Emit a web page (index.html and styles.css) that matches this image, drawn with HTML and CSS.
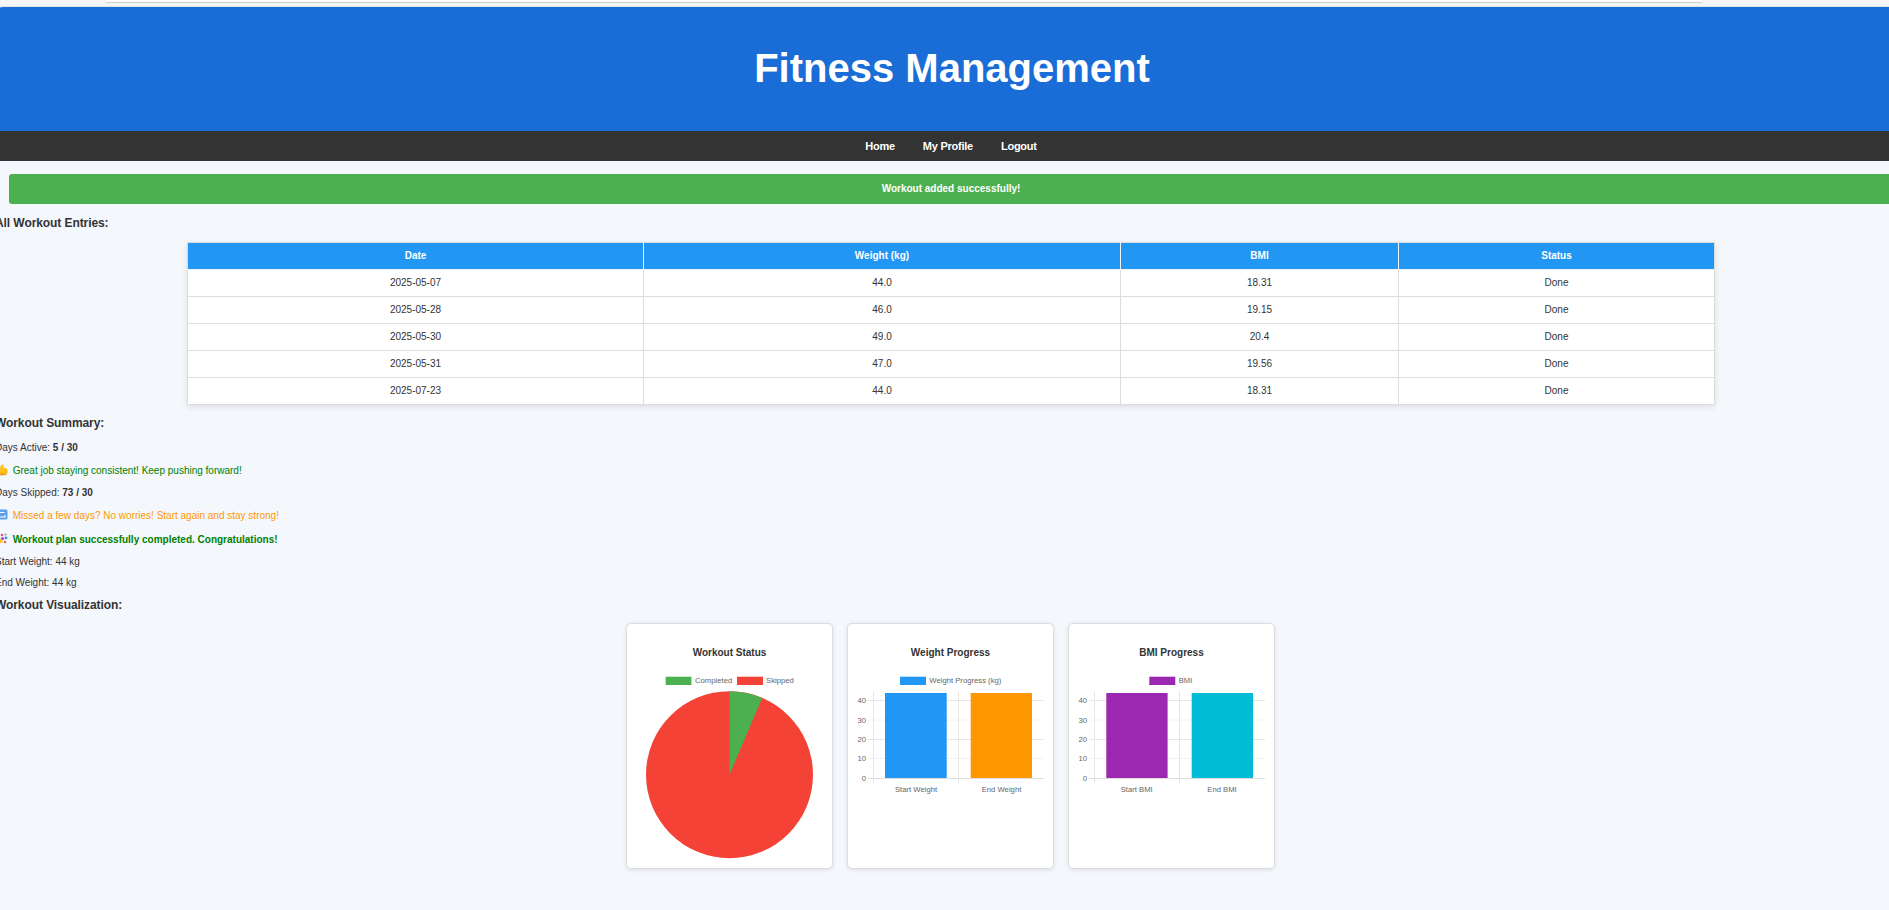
FILE: index.html
```html
<!DOCTYPE html>
<html lang="en">

<head>
    <meta charset="UTF-8">
    <meta name="viewport" content="width=device-width, initial-scale=1.0">
    <title>Fitness Management</title>
    <link rel="stylesheet" href="styles.css">
</head>

<body>
    <div class="topstrip">
        <div class="topstrip-box"></div>
    </div>

    <div class="page">
        <header class="site-header">
            <h1>Fitness Management</h1>
        </header>

        <nav class="site-nav">
            <a href="#">Home</a>
            <a href="#">My Profile</a>
            <a href="#">Logout</a>
        </nav>

        <div class="alert">Workout added successfully!</div>

        <h3 class="first-heading">All Workout Entries:</h3>

        <table class="entries">
            <colgroup>
                <col class="col-date">
                <col class="col-weight">
                <col class="col-bmi">
                <col class="col-status">
            </colgroup>
            <thead>
                <tr>
                    <th>Date</th>
                    <th>Weight (kg)</th>
                    <th>BMI</th>
                    <th>Status</th>
                </tr>
            </thead>
            <tbody>
                <tr>
                    <td>2025-05-07</td>
                    <td>44.0</td>
                    <td>18.31</td>
                    <td>Done</td>
                </tr>
                <tr>
                    <td>2025-05-28</td>
                    <td>46.0</td>
                    <td>19.15</td>
                    <td>Done</td>
                </tr>
                <tr>
                    <td>2025-05-30</td>
                    <td>49.0</td>
                    <td>20.4</td>
                    <td>Done</td>
                </tr>
                <tr>
                    <td>2025-05-31</td>
                    <td>47.0</td>
                    <td>19.56</td>
                    <td>Done</td>
                </tr>
                <tr>
                    <td>2025-07-23</td>
                    <td>44.0</td>
                    <td>18.31</td>
                    <td>Done</td>
                </tr>
            </tbody>
        </table>

        <h3 class="summary-heading">Workout Summary:</h3>
        <p>Days Active: <strong>5 / 30</strong></p>
        <p class="note good">
            <svg class="emoji" viewBox="0 0 13 13">
                <path d="M1 9.5 C1 7 3 6.5 4.5 7 L5.6 3 C6 1.6 7.6 1.4 8.8 2 L8 4.4 L8.4 5 C10.4 4.2 12.8 5.6 12.8 8.4 C12.8 11 10.8 12.2 8.4 12.2 L3 12.2 C1.8 12.2 1 11 1 9.5 Z" fill="#fcc21b"/>
                <path d="M3 12.2 C5 12.2 6.4 11 6.8 9.2 C7.6 10.6 9.6 11.2 12 10.2 C11.2 11.6 9.8 12.2 8.4 12.2 Z" fill="#f79329"/>
            </svg>Great job staying consistent! Keep pushing forward!</p>
        <p>Days Skipped: <strong>73 / 30</strong></p>
        <p class="note warn">
            <svg class="emoji" viewBox="0 0 13 13">
                <rect x="0.5" y="1.5" width="12" height="10" rx="1.5" fill="#5aa0ec"/>
                <path d="M3 6 V4.5 H9.5 M3 7.5 V9 H10 V7" fill="none" stroke="#fff" stroke-width="1.1"/>
            </svg>Missed a few days? No worries! Start again and stay strong!</p>
        <p class="note good">
            <svg class="emoji" viewBox="0 0 13 13">
                <path d="M1 12.5 L3.5 5 L8.5 10 Z" fill="#fcc21b"/>
                <circle cx="7" cy="3" r="1.3" fill="#e64a9d"/>
                <circle cx="11" cy="6" r="1.4" fill="#4a90e2"/>
                <circle cx="7.5" cy="6.5" r="1.6" fill="#ab47bc"/>
                <circle cx="10" cy="10" r="1.2" fill="#ef5350"/>
                <circle cx="10.5" cy="2.5" r="1.1" fill="#66bb6a"/>
            </svg><strong>Workout plan successfully completed. Congratulations!</strong></p>
        <p>Start Weight: 44 kg</p>
        <p>End Weight: 44 kg</p>

        <h3>Workout Visualization:</h3>

        <div class="charts">
            <div class="chart-card">
                <svg class="chart" viewBox="0 0 205 243">
                    <text class="chart-title" x="102.5" y="31.5">Workout Status</text>
                    <rect x="38.7" y="52.7" width="25.7" height="8.3" fill="#4caf50"/>
                    <text class="legend" x="68" y="59">Completed</text>
                    <rect x="110" y="52.7" width="26" height="8.3" fill="#f44336"/>
                    <text class="legend" x="139" y="59">Skipped</text>
                    <circle cx="102.5" cy="150.7" r="83.5" fill="#f44336"/>
                    <path d="M102.5 150.7 V67.2 A83.5 83.5 0 0 1 135.2 73.9 Z" fill="#4caf50"/>
                </svg>
            </div>

            <div class="chart-card">
                <svg class="chart" viewBox="0 0 205 243">
                    <text class="chart-title" x="102.5" y="31.5">Weight Progress</text>
                    <rect x="52" y="52.7" width="26" height="8.3" fill="#2196f3"/>
                    <text class="legend" x="81.3" y="59">Weight Progress (kg)</text>
                    <path class="grid" d="M25.5 67 V159 M110.5 67 V159 M20 76.5 H196 M20 115.5 H196"/>
                    <path class="grid-light" d="M20 96 H196 M20 134.5 H196"/>
                    <path class="axis" d="M20 154.5 H196"/>
                    <rect x="37" y="69" width="61.7" height="85" fill="#2196f3"/>
                    <rect x="122.7" y="69" width="61.3" height="85" fill="#ff9800"/>
                    <text class="tick tick-y" x="18" y="79">40</text>
                    <text class="tick tick-y" x="18" y="98.5">30</text>
                    <text class="tick tick-y" x="18" y="118">20</text>
                    <text class="tick tick-y" x="18" y="137">10</text>
                    <text class="tick tick-y" x="18" y="157">0</text>
                    <text class="tick tick-x" x="68" y="168">Start Weight</text>
                    <text class="tick tick-x" x="153.5" y="168">End Weight</text>
                </svg>
            </div>

            <div class="chart-card">
                <svg class="chart" viewBox="0 0 205 243">
                    <text class="chart-title" x="102.5" y="31.5">BMI Progress</text>
                    <rect x="80.3" y="52.7" width="26" height="8.3" fill="#9c27b0"/>
                    <text class="legend" x="109.7" y="59">BMI</text>
                    <path class="grid" d="M25.5 67 V159 M110.5 67 V159 M20 76.5 H196 M20 115.5 H196"/>
                    <path class="grid-light" d="M20 96 H196 M20 134.5 H196"/>
                    <path class="axis" d="M20 154.5 H196"/>
                    <rect x="37.3" y="69" width="61.3" height="85" fill="#9c27b0"/>
                    <rect x="122.7" y="69" width="61.3" height="85" fill="#00bcd4"/>
                    <text class="tick tick-y" x="18" y="79">40</text>
                    <text class="tick tick-y" x="18" y="98.5">30</text>
                    <text class="tick tick-y" x="18" y="118">20</text>
                    <text class="tick tick-y" x="18" y="137">10</text>
                    <text class="tick tick-y" x="18" y="157">0</text>
                    <text class="tick tick-x" x="67.7" y="168">Start BMI</text>
                    <text class="tick tick-x" x="153" y="168">End BMI</text>
                </svg>
            </div>
        </div>
    </div>
</body>

</html>
```
FILE: styles.css
```css
* {
    box-sizing: border-box;
}

html {
    overflow: hidden;
}

body {
    margin: 0;
    min-height: 910px;
    background-color: #f4f7fc;
    color: #333;
    font-family: "Liberation Sans", Arial, sans-serif;
    font-size: 10px;
}

.topstrip {
    height: 7px;
    background-color: #f6f6f6;
    border-bottom: 1px solid #e4e4e4;
}

.topstrip-box {
    width: 1598px;
    height: 3px;
    margin-left: 105px;
    background-color: #fff;
    border-bottom: 1px solid #ccc;
    border-radius: 0 0 8px 8px;
}

/* page is a bit wider than the window and sticks out on the left */
.page {
    width: 1914px;
    margin-left: -5px;
}

.site-header {
    height: 124px;
    padding-top: 38px;
    background-color: #1a6cd6;
    border-radius: 8px 8px 0 0;
    color: #fff;
    text-align: center;
}

.site-header h1 {
    margin: 0;
    font-size: 40px;
    line-height: 46px;
}

.site-nav {
    display: flex;
    justify-content: center;
    align-items: center;
    gap: 28px;
    height: 30px;
    padding-right: 2px;
    background-color: #333;
}

.site-nav a {
    color: #fff;
    font-size: 11px;
    font-weight: bold;
    letter-spacing: -0.25px;
    text-decoration: none;
}

.alert {
    width: 1884px;
    height: 30px;
    margin: 13px 0 0 14px;
    background-color: #4caf50;
    border-radius: 3px;
    color: #fff;
    font-weight: bold;
    line-height: 30px;
    text-align: center;
}

h3 {
    margin: 9.5px 0 11.5px;
    font-size: 12px;
    letter-spacing: -0.08px;
    line-height: 14px;
}

.first-heading {
    margin-top: 11.5px;
    margin-bottom: 12px;
}

p {
    margin: 9.5px 0;
    line-height: 11.5px;
}

.note {
    line-height: 14px;
}

.good {
    color: green;
}

.warn {
    color: #ff9800;
}

.emoji {
    width: 13px;
    height: 13px;
    margin-right: 4.7px;
    vertical-align: -2.5px;
}

.entries {
    width: 1527px;
    margin: 0 0 11.5px 192px;
    border-collapse: collapse;
    table-layout: fixed;
    background-color: #fff;
    box-shadow: 0 2px 6px rgba(0, 0, 0, 0.1);
}

.col-date {
    width: 456px;
}

.col-weight {
    width: 477px;
}

.col-bmi {
    width: 278px;
}

.col-status {
    width: 316px;
}

.entries th,
.entries td {
    height: 27px;
    padding: 0 8px;
    border: 1px solid #ddd;
    text-align: center;
}

.entries th {
    background-color: #2196f3;
    border-right-color: #eef5fc;
    border-bottom-color: #eef5fc;
    color: #fff;
}

.entries th:last-child {
    border-right-color: #ddd;
}

.charts {
    display: flex;
    justify-content: center;
    gap: 14px;
    padding-right: 3px;
}

.chart-card {
    width: 207px;
    height: 246px;
    background-color: #fff;
    border: 1px solid #ddd;
    border-radius: 5px;
    box-shadow: 0 1px 4px rgba(0, 0, 0, 0.1);
}

.chart {
    display: block;
    width: 205px;
    height: 243px;
}

.chart text {
    font-family: "Liberation Sans", Arial, sans-serif;
}

.chart .chart-title {
    fill: #333;
    font-size: 10px;
    font-weight: bold;
    text-anchor: middle;
}

.chart .legend {
    fill: #666;
    font-size: 7.7px;
}

.chart .tick {
    fill: #666;
    font-size: 7.7px;
}

.chart .tick-y {
    text-anchor: end;
}

.chart .tick-x {
    text-anchor: middle;
}

.grid {
    fill: none;
    stroke: #e6e6e6;
    stroke-width: 1;
}

.grid-light {
    fill: none;
    stroke: #f2f2f2;
    stroke-width: 1;
}

.axis {
    fill: none;
    stroke: #ddd;
    stroke-width: 1;
}
```
